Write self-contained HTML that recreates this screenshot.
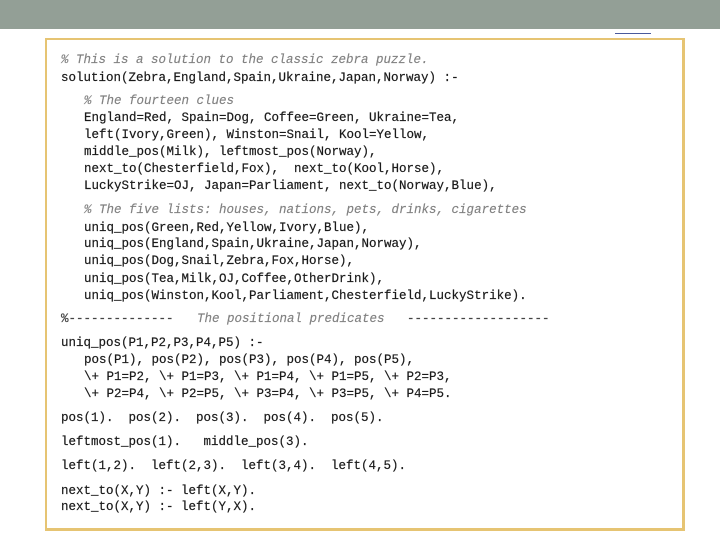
<!DOCTYPE html>
<html>
<head>
<meta charset="utf-8">
<style>
html,body{margin:0;padding:0;width:720px;height:540px;overflow:hidden;background:#fff}
#bar{position:absolute;left:0;top:0;width:720px;height:29px;background:#939f96}
#ul{position:absolute;left:615px;top:33px;width:36px;height:1px;background:#4a5a9c}
#box{position:absolute;left:45px;top:38px;width:635px;height:488px;border:2px solid #e6c473;border-right-width:3px;border-bottom-width:3px;box-sizing:content-box}
.l{position:absolute;white-space:pre;font:12.5px/16px "Liberation Mono",monospace;color:#1a1a1a;-webkit-text-stroke:.2px #1a1a1a;filter:blur(.35px)}
.c{color:#808080;font-style:italic;-webkit-text-stroke:.15px #808080}
.g{color:#444;-webkit-text-stroke:.25px #444}
</style>
</head>
<body>
<div id="bar"></div>
<div id="ul"></div>
<div id="box"></div>
<div class="l c" style="left:61px;top:52px">% This is a solution to the classic zebra puzzle.</div>
<div class="l" style="left:61px;top:70px">solution(Zebra,England,Spain,Ukraine,Japan,Norway) :-</div>
<div class="l c" style="left:84px;top:93px">% The fourteen clues</div>
<div class="l" style="left:84px;top:110px">England=Red, Spain=Dog, Coffee=Green, Ukraine=Tea,</div>
<div class="l" style="left:84px;top:127px">left(Ivory,Green), Winston=Snail, Kool=Yellow,</div>
<div class="l" style="left:84px;top:144px">middle_pos(Milk), leftmost_pos(Norway),</div>
<div class="l" style="left:84px;top:161px">next_to(Chesterfield,Fox),  next_to(Kool,Horse),</div>
<div class="l" style="left:84px;top:178px">LuckyStrike=OJ, Japan=Parliament, next_to(Norway,Blue),</div>
<div class="l c" style="left:84px;top:202px">% The five lists: houses, nations, pets, drinks, cigarettes</div>
<div class="l" style="left:84px;top:220px">uniq_pos(Green,Red,Yellow,Ivory,Blue),</div>
<div class="l" style="left:84px;top:236px">uniq_pos(England,Spain,Ukraine,Japan,Norway),</div>
<div class="l" style="left:84px;top:253px">uniq_pos(Dog,Snail,Zebra,Fox,Horse),</div>
<div class="l" style="left:84px;top:271px">uniq_pos(Tea,Milk,OJ,Coffee,OtherDrink),</div>
<div class="l" style="left:84px;top:288px">uniq_pos(Winston,Kool,Parliament,Chesterfield,LuckyStrike).</div>
<div class="l g" style="left:61px;top:311px">%--------------</div>
<div class="l c" style="left:197px;top:311px">The positional predicates</div>
<div class="l g" style="left:407px;top:311px">-------------------</div>
<div class="l" style="left:61px;top:335px">uniq_pos(P1,P2,P3,P4,P5) :-</div>
<div class="l" style="left:84px;top:352px">pos(P1), pos(P2), pos(P3), pos(P4), pos(P5),</div>
<div class="l" style="left:84px;top:369px">\+ P1=P2, \+ P1=P3, \+ P1=P4, \+ P1=P5, \+ P2=P3,</div>
<div class="l" style="left:84px;top:386px">\+ P2=P4, \+ P2=P5, \+ P3=P4, \+ P3=P5, \+ P4=P5.</div>
<div class="l" style="left:61px;top:410px">pos(1).  pos(2).  pos(3).  pos(4).  pos(5).</div>
<div class="l" style="left:61px;top:434px">leftmost_pos(1).   middle_pos(3).</div>
<div class="l" style="left:61px;top:458px">left(1,2).  left(2,3).  left(3,4).  left(4,5).</div>
<div class="l" style="left:61px;top:483px">next_to(X,Y) :- left(X,Y).</div>
<div class="l" style="left:61px;top:499px">next_to(X,Y) :- left(Y,X).</div>
</body>
</html>
